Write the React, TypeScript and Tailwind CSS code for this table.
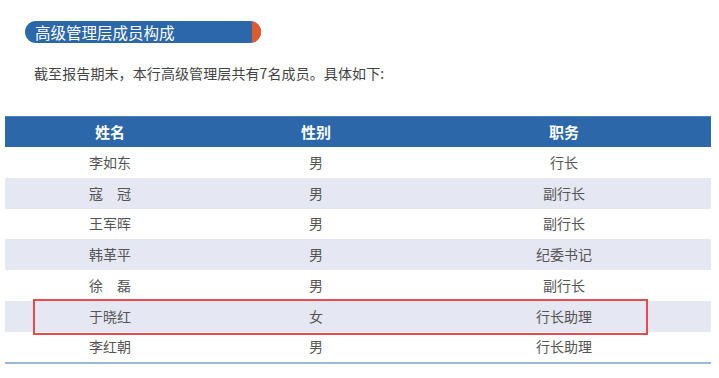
const ROWS = [
  { name: "李如东", gender: "男", title: "行长" },
  { name: "寇　冠", gender: "男", title: "副行长" },
  { name: "王军晖", gender: "男", title: "副行长" },
  { name: "韩革平", gender: "男", title: "纪委书记" },
  { name: "徐　磊", gender: "男", title: "副行长" },
  { name: "于晓红", gender: "女", title: "行长助理" },
  { name: "李红朝", gender: "男", title: "行长助理" },
]

export default function App() {
  return (
    <div
      className="h-[378px] w-[719px] overflow-hidden bg-white"
      style={{ fontFamily: '"Noto Sans CJK SC", "Noto Sans", sans-serif' }}
    >
      {/* Section title */}
      <div className="pl-[25px] pt-[21px]">
        <div className="flex h-[22px] w-[236px] overflow-hidden rounded-full bg-[#2b67a9]">
          <div className="flex-1 pl-[10px] text-[15.5px] leading-[22px] text-white">高级管理层成员构成</div>
          <div className="w-[9px] bg-[#e2592b]" />
        </div>
      </div>

      <p className="mt-[20px] pl-[34px] text-[14px] leading-[20px] tracking-[0.1px] text-[#444]">
        截至报告期末，本行高级管理层共有7名成员。具体如下:
      </p>

      {/* Table */}
      <div className="relative ml-[5px] mt-[33px] w-[706px]">
        <div className="grid h-[31px] grid-cols-[210px_202px_294px] items-center border-t border-[#4a80bb] bg-[#2b67a9] text-[15px] font-bold text-white">
          <div className="text-center">姓名</div>
          <div className="text-center">性别</div>
          <div className="text-center">职务</div>
        </div>
        {ROWS.map((r, i) => (
          <div
            key={i}
            className={`grid h-[30.75px] grid-cols-[210px_202px_294px] items-center text-[14px] text-[#555] ${
              i % 2 === 1 ? "bg-[#e5e7f2]" : "bg-white"
            }`}
          >
            <div className="text-center">{r.name}</div>
            <div className="text-center">{r.gender}</div>
            <div className="text-center">{r.title}</div>
          </div>
        ))}
        <div className="h-[2px] bg-[#9ab9da]" />

        {/* Highlight annotation */}
        <div className="absolute left-[28px] top-[183px] h-[36px] w-[615px] border-2 border-[#ec4a4a]" />
      </div>
    </div>
  )
}
